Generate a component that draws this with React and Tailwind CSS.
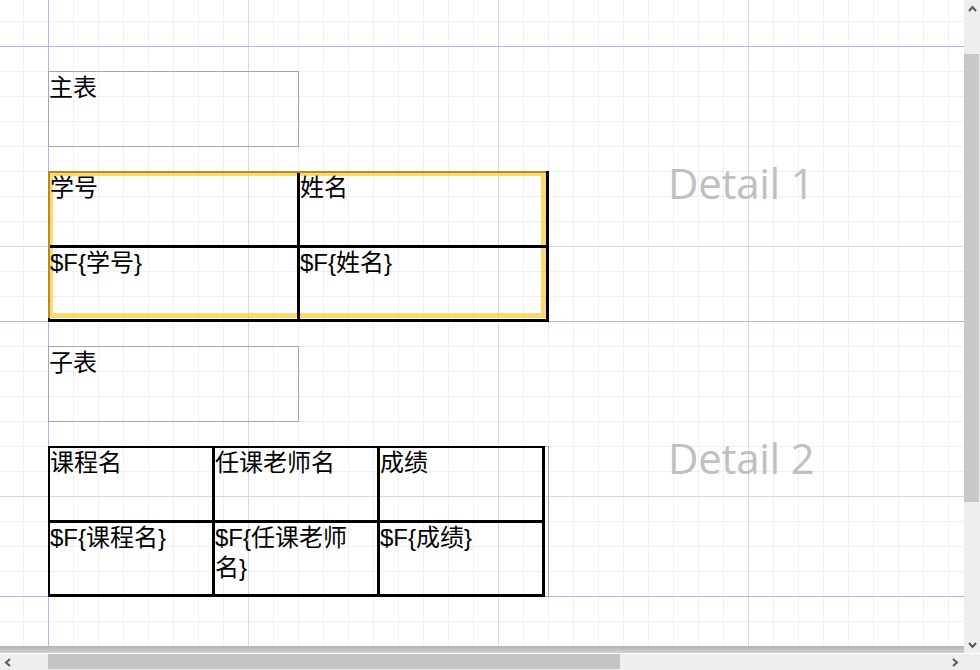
import React from "react";

function Chevron({ dir }) {
  const pts = {
    up: "1,6 4.5,2 8,6",
    down: "1,2 4.5,6 8,2",
    left: "6,1 2,4.5 6,8",
    right: "2,1 6,4.5 2,8",
  }[dir];
  return (
    <svg width="9" height="9" viewBox="0 0 9 9">
      <polyline points={pts} fill="none" stroke="#5a5a5a" strokeWidth="2" />
    </svg>
  );
}

function Cell({ className = "", children }) {
  return (
    <div className={"relative z-10 border-black text-[24px] leading-[30px] text-black " + className}>
      {children}
    </div>
  );
}

function Band({ label, children }) {
  return (
    <div className="flex h-[275px] shrink-0 border-b border-[#b4b4f2]">
      <div className="flex w-[549px] shrink-0 flex-col gap-[24px] pl-[48px] pt-[24px]">{children}</div>
      <div className="mb-[4px] ml-[119px] self-center font-['Open_Sans',sans-serif] text-[42px] tracking-[-0.3px] text-[#c0c0c0]">
        {label}
      </div>
    </div>
  );
}

function TitleBox({ children }) {
  return (
    <div className="h-[76px] w-[251px] shrink-0 border border-[#a6a6a6] pt-px text-[24px] leading-[30px] text-black">
      {children}
    </div>
  );
}

export default function App() {
  return (
    <div className="flex h-[670px] w-[980px] flex-col overflow-hidden bg-white font-['Liberation_Sans','Noto_Sans_CJK_SC',sans-serif]">
      <div className="flex h-[653px]">
        <div className="flex w-[964px] flex-col">
          <div className="flex h-[646px] flex-col overflow-hidden [background-image:linear-gradient(to_right,transparent_48px,#b4b4f2_48px,#b4b4f2_49px,transparent_49px),linear-gradient(to_right,#d9d9d9_1px,transparent_1px),linear-gradient(to_bottom,#d9d9d9_1px,transparent_1px),linear-gradient(to_right,#f0f0f0_1px,transparent_1px),linear-gradient(to_bottom,#f0f0f0_1px,transparent_1px)] [background-size:100%_100%,250px_100%,100%_250px,25px_100%,100%_25px] [background-position:0_0,248px_0,0_246px,23px_0,0_21px]">
            <div className="h-[47px] shrink-0 border-b border-[#b4b4f2]" />
            <Band label="Detail 1">
              <TitleBox>主表</TitleBox>
              <div className="relative h-[151px] w-[501px] shrink-0">
                <div className="grid h-full w-full grid-cols-[250px_1fr] grid-rows-[75px_1fr] border-b-[3px] border-l-2 border-r-[3px] border-t-2 border-black">
                  <Cell className="border-b-[3px] border-r-[3px]">学号</Cell>
                  <Cell className="border-b-[3px]">姓名</Cell>
                  <Cell className="border-r-[3px]">{"$F{学号}"}</Cell>
                  <Cell>{"$F{姓名}"}</Cell>
                </div>
                <div className="absolute left-0 top-0 h-[147px] w-[498px] border-[5px] border-[#ffc933]/70" />
              </div>
            </Band>
            <Band label="Detail 2">
              <TitleBox>子表</TitleBox>
              <div className="h-[151px] w-[501px] shrink-0 border border-[#a6a6a6]">
                <div className="-m-px grid h-[151px] w-[497px] grid-cols-[165px_165px_1fr] grid-rows-[75px_1fr] border-b-[3px] border-l-2 border-r-[3px] border-t-2 border-black">
                  <Cell className="border-b-[3px] border-r-[3px]">课程名</Cell>
                  <Cell className="border-b-[3px] border-r-[3px]">任课老师名</Cell>
                  <Cell className="border-b-[3px]">成绩</Cell>
                  <Cell className="border-r-[3px]">{"$F{课程名}"}</Cell>
                  <Cell className="border-r-[3px]">{"$F{任课老师名}"}</Cell>
                  <Cell>{"$F{成绩}"}</Cell>
                </div>
              </div>
            </Band>
          </div>
          <div className="h-[7px] bg-gradient-to-b from-[#b2b2b2] to-[#d2d2d2]" />
        </div>
        <div className="flex w-[16px] flex-col bg-[#eeeeee]">
          <div className="flex h-[18px] items-center justify-center">
            <Chevron dir="up" />
          </div>
          <div className="mt-[36px] h-[448px] w-[15px] bg-[#c8c8c8]" />
          <div className="flex-1" />
          <div className="flex h-[16px] items-center justify-center">
            <Chevron dir="down" />
          </div>
        </div>
      </div>
      <div className="flex h-[17px] border-t border-white bg-[#eeeeee]">
        <div className="flex h-full w-[16px] items-center justify-center">
          <Chevron dir="left" />
        </div>
        <div className="ml-[32px] h-[15px] w-[572px] bg-[#c4c4c4]" />
        <div className="ml-auto mr-[17px] flex h-full w-[16px] items-center justify-center">
          <Chevron dir="right" />
        </div>
      </div>
    </div>
  );
}
